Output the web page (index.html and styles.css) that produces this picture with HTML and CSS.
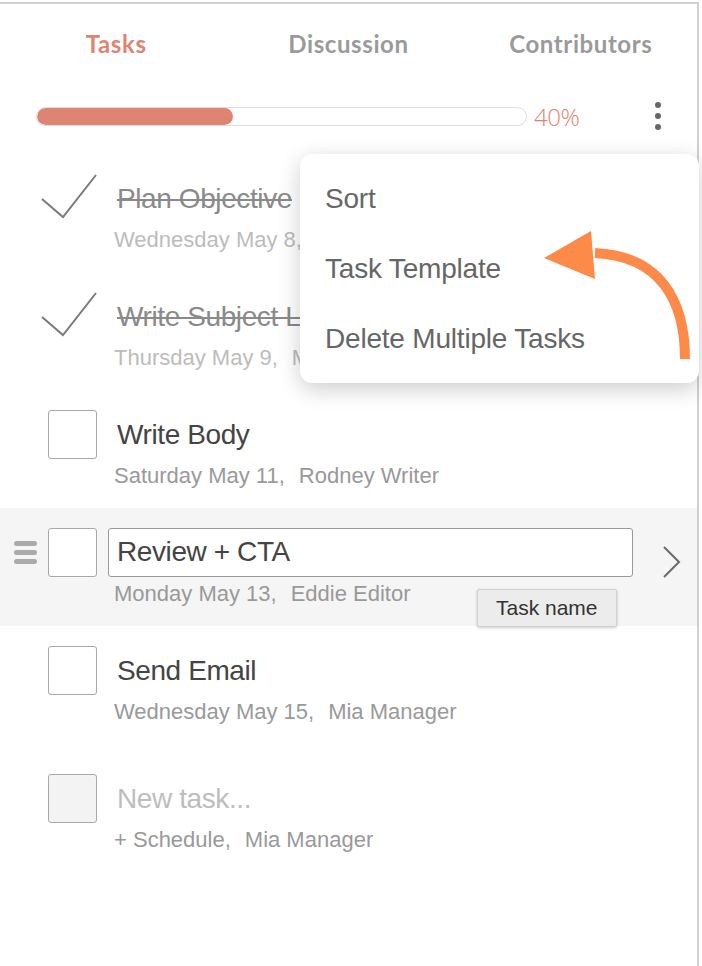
FILE: index.html
```html
<!DOCTYPE html>
<html>
<head>
    <title>Tasks</title>
    <link rel="stylesheet" href="styles.css">
</head>

<body>
    <div class="panel">
        <div class="tabs">
            <span class="tab active">Tasks</span>
            <span class="tab">Discussion</span>
            <span class="tab">Contributors</span>
        </div>

        <div class="progress-row">
            <div class="progress"><div class="progress-fill" style="width:40%"></div></div>
            <span class="progress-label">40%</span>
            <span class="kebab"><i></i><i></i><i></i></span>
        </div>

        <div class="task-list">
            <div class="task done">
                <div class="task-main">
                    <svg class="check" width="58" height="49" viewBox="0 0 58 49"><path d="M2 25 L23 43 L56 1" fill="none" stroke="#7a7a7a" stroke-width="2"/></svg>
                    <span class="task-title">Plan Objective</span>
                </div>
                <div class="task-meta">Wednesday May 8,<span class="who">Mia Manager</span></div>
            </div>

            <div class="task done">
                <div class="task-main">
                    <svg class="check" width="58" height="49" viewBox="0 0 58 49"><path d="M2 25 L23 43 L56 1" fill="none" stroke="#7a7a7a" stroke-width="2"/></svg>
                    <span class="task-title">Write Subject Line</span>
                </div>
                <div class="task-meta">Thursday May 9,<span class="who">Mia Manager</span></div>
            </div>

            <div class="task">
                <div class="task-main">
                    <span class="box"></span>
                    <span class="task-title">Write Body</span>
                </div>
                <div class="task-meta">Saturday May 11,<span class="who">Rodney Writer</span></div>
            </div>

            <div class="task selected">
                <span class="handle"><i></i><i></i><i></i></span>
                <div class="task-main">
                    <span class="box"></span>
                    <span class="task-input">Review + CTA</span>
                    <svg class="chevron" width="20" height="34" viewBox="0 0 20 34"><path d="M2 2 L17 17 L2 32" fill="none" stroke="#6a6a6a" stroke-width="2"/></svg>
                </div>
                <div class="task-meta">Monday May 13,<span class="who">Eddie Editor</span></div>
                <span class="tooltip">Task name</span>
            </div>

            <div class="task">
                <div class="task-main">
                    <span class="box"></span>
                    <span class="task-title">Send Email</span>
                </div>
                <div class="task-meta">Wednesday May 15,<span class="who">Mia Manager</span></div>
            </div>

            <div class="task new">
                <div class="task-main">
                    <span class="box"></span>
                    <span class="task-title">New task...</span>
                </div>
                <div class="task-meta">+ Schedule,<span class="who">Mia Manager</span></div>
            </div>
        </div>

        <div class="menu">
            <div class="menu-item">Sort</div>
            <div class="menu-item">Task Template</div>
            <div class="menu-item">Delete Multiple Tasks</div>
        </div>

        <svg class="arrow" width="160" height="140" viewBox="0 0 160 140">
            <path d="M145 129 C145 70 120 26 55 23" fill="none" stroke="#fd8a48" stroke-width="10"/>
            <polygon points="4,28 51,1 55,49" fill="#fd8a48"/>
        </svg>
    </div>
</body>
</html>
```

FILE: styles.css
```css
body {
    margin: 0;
    background: #fff;
    font-family: 'Liberation Sans', Arial, sans-serif;
}

.panel {
    position: relative;
    width: 697px;
    height: 962px;
    margin-top: 2px;
    border-top: 2px solid #d0d0d0;
    border-right: 2px solid #d0d0d0;
    background: #fff;
}

/* tabs */
.tabs {
    display: grid;
    grid-template-columns: repeat(3, 1fr);
    height: 80px;
    align-items: center;
}

.tab {
    text-align: center;
    font-family: 'Lato', sans-serif;
    font-weight: 700;
    font-size: 24px;
    color: #9a9a9a;
    letter-spacing: 0.6px;
    padding-bottom: 2px;
}

.tab.active {
    color: #df8470;
}

/* progress */
.progress-row {
    display: flex;
    align-items: center;
    padding-left: 36px;
    height: 60px;
    margin-top: 2px;
}

.progress {
    width: 489px;
    height: 17px;
    border: 1px solid #dedede;
    border-radius: 10px;
    overflow: hidden;
    background: #fff;
}

.progress-fill {
    height: 100%;
    background: #dd8472;
    border-radius: 10px;
}

.progress-label {
    margin-left: 7px;
    font-size: 24px;
    font-weight: 300;
    color: #df8470;
    font-family: 'Open Sans', sans-serif;
    letter-spacing: -0.5px;
}

.kebab {
    display: flex;
    flex-direction: column;
    gap: 5px;
    margin-left: 76px;
}

.kebab i {
    width: 6px;
    height: 6px;
    border-radius: 50%;
    background: #666;
}

/* tasks */
.task-list {
    padding-top: 8px;
}

.task {
    position: relative;
    height: 98px;
    padding: 20px 0 0 48px;
}

.task.new {
    margin-top: 10px;
}

.task.selected {
    background: #f5f5f5;
}

.task-main {
    display: flex;
    align-items: center;
    height: 49px;
}

.box {
    width: 47px;
    height: 47px;
    border: 1px solid #a8a8a8;
    border-radius: 3px;
    background: #fff;
    flex: none;
}

.task.new .box {
    background: #f3f3f3;
}

.check {
    margin-left: -8px;
    flex: none;
}

.task-title {
    margin-left: 20px;
    font-size: 28px;
    color: #444;
    letter-spacing: -0.4px;
}

.task.done .task-title {
    margin-left: 19px;
    color: #8a8a8a;
    text-decoration: line-through;
    text-decoration-thickness: 2px;
}

.task.new .task-title {
    color: #bdbdbd;
}

.task-input {
    box-sizing: border-box;
    width: 525px;
    height: 49px;
    margin-left: 11px;
    padding-left: 8px;
    border: 1.5px solid #999;
    border-radius: 3px;
    background: #fff;
    font-size: 28px;
    color: #444;
    line-height: 46px;
    letter-spacing: -0.4px;
}

.chevron {
    margin-left: 29px;
    margin-top: 18px;
}

.task-meta {
    margin-top: 4px;
    padding-left: 66px;
    font-size: 22px;
    line-height: 26px;
    color: #999;
}

.task.done .task-meta {
    color: #bcbcbc;
}

.who {
    margin-left: 14px;
}

.handle {
    position: absolute;
    left: 14px;
    top: 33px;
    display: flex;
    flex-direction: column;
    gap: 4px;
}

.handle i {
    width: 23px;
    height: 5px;
    border-radius: 3px;
    background: #aaa;
}

.tooltip {
    position: absolute;
    left: 477px;
    top: 81px;
    padding: 6px 18px 6px 18px;
    font-size: 21px;
    color: #333;
    background: #ececec;
    border: 1px solid #d0d0d0;
    border-radius: 2px;
    box-shadow: 0 1px 3px rgba(0, 0, 0, 0.2);
}

/* dropdown menu */
.menu {
    position: absolute;
    left: 300px;
    top: 150px;
    width: 399px;
    height: 219px;
    padding-top: 10px;
    background: #fff;
    border-radius: 12px;
    box-shadow: 0 6px 22px rgba(0, 0, 0, 0.2);
}

.menu-item {
    height: 70px;
    line-height: 70px;
    padding-left: 25px;
    font-size: 28px;
    color: #666;
    letter-spacing: -0.2px;
}

.arrow {
    position: absolute;
    left: 540px;
    top: 226px;
}
```
